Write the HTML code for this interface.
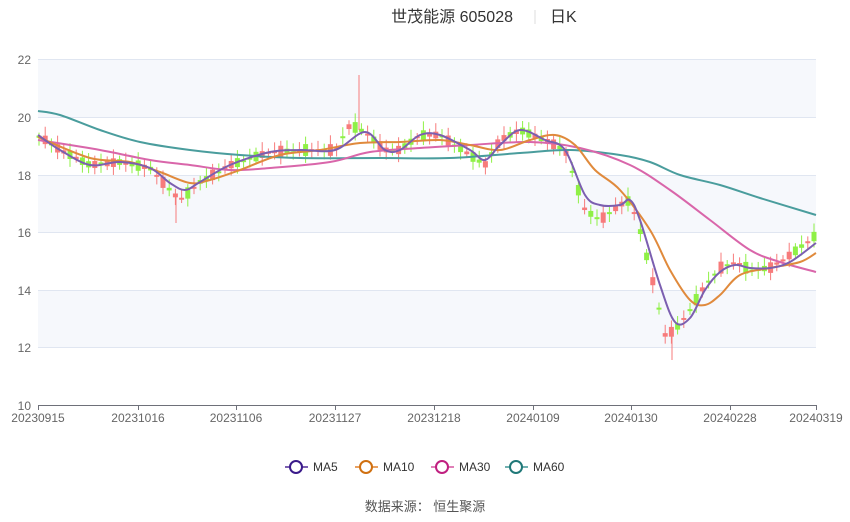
<!DOCTYPE html>
<html><head><meta charset="utf-8"><style>
body{margin:0;background:#fff;width:850px;height:517px;overflow:hidden;font-family:"Liberation Sans","Noto Sans CJK SC",sans-serif;}
</style></head><body>
<svg id="s" width="850" height="517" xmlns="http://www.w3.org/2000/svg" font-family="Liberation Sans, Noto Sans CJK SC, sans-serif">
<text x="513" y="22" font-size="16" fill="#333" text-anchor="end">世茂能源 605028</text>
<line x1="535" y1="10" x2="535" y2="24" stroke="#ddd"/>
<text x="550" y="22" font-size="16" fill="#333">日K</text>
<rect x="38" y="59" width="778" height="58" fill="#f6f8fc"/>
<rect x="38" y="175" width="778" height="57" fill="#f6f8fc"/>
<rect x="38" y="290" width="778" height="57" fill="#f6f8fc"/>
<g stroke="#e0e6f1" stroke-width="1">
<line x1="38" y1="59.5" x2="816" y2="59.5"/><line x1="38" y1="117.5" x2="816" y2="117.5"/>
<line x1="38" y1="175.5" x2="816" y2="175.5"/><line x1="38" y1="232.5" x2="816" y2="232.5"/>
<line x1="38" y1="290.5" x2="816" y2="290.5"/><line x1="38" y1="347.5" x2="816" y2="347.5"/>
</g>
<g font-size="12" fill="#666" text-anchor="end">
<text x="31" y="64">22</text><text x="31" y="122">20</text><text x="31" y="180">18</text>
<text x="31" y="237">16</text><text x="31" y="295">14</text><text x="31" y="352">12</text><text x="31" y="410">10</text>
</g>
<line x1="38" y1="405.5" x2="816" y2="405.5" stroke="#6e7079"/>
<g stroke="#6e7079">
<line x1="38.5" y1="405" x2="38.5" y2="410"/><line x1="138.5" y1="405" x2="138.5" y2="410"/><line x1="236.5" y1="405" x2="236.5" y2="410"/><line x1="335.5" y1="405" x2="335.5" y2="410"/><line x1="434.5" y1="405" x2="434.5" y2="410"/><line x1="533.5" y1="405" x2="533.5" y2="410"/><line x1="631.5" y1="405" x2="631.5" y2="410"/><line x1="730.5" y1="405" x2="730.5" y2="410"/><line x1="816.5" y1="405" x2="816.5" y2="410"/>
</g>
<g font-size="12" fill="#666" text-anchor="middle">
<text x="38" y="422">20230915</text><text x="138" y="422">20231016</text><text x="236" y="422">20231106</text><text x="335" y="422">20231127</text><text x="434" y="422">20231218</text><text x="533" y="422">20240109</text><text x="631" y="422">20240130</text><text x="730" y="422">20240228</text><text x="816" y="422">20240319</text>
</g>
<g id="c"></g>
<g id="l" fill="none" stroke-width="2"></g>
<g font-size="12" fill="#333" stroke-width="2">
<line x1="285" y1="467" x2="308" y2="467" stroke="#7b5fb0"/><circle cx="296" cy="467" r="6" fill="#fff" stroke="#3a1a8a"/><text x="313" y="471">MA5</text>
<line x1="355" y1="467" x2="378" y2="467" stroke="#e8a060"/><circle cx="366" cy="467" r="6" fill="#fff" stroke="#d07010"/><text x="383" y="471">MA10</text>
<line x1="431" y1="467" x2="454" y2="467" stroke="#e080b8"/><circle cx="442" cy="467" r="6" fill="#fff" stroke="#c02080"/><text x="459" y="471">MA30</text>
<line x1="505" y1="467" x2="528" y2="467" stroke="#70b0b0"/><circle cx="516" cy="467" r="6" fill="#fff" stroke="#207878"/><text x="533" y="471">MA60</text>
</g>
<text x="425" y="511" font-size="13" fill="#555" text-anchor="middle">数据来源：  恒生聚源</text>
</svg>
<script>
var k=[[38,135],[60,150],[90,165],[120,162],[150,168],[170,190],[180,200],[200,182],[230,165],[270,152],[300,150],[335,150],[350,125],[365,132],[385,150],[400,150],[420,135],[440,135],[470,155],[485,165],[500,140],[520,130],[545,140],[565,150],[585,210],[600,220],[620,205],[630,200],[640,230],[655,290],[665,335],[675,330],[690,310],[705,285],[720,268],[735,262],[750,270],[770,268],[790,255],[816,235]];
function f(x){for(var i=1;i<k.length;i++)if(x<=k[i][0]){var a=k[i-1],b=k[i];return a[1]+(b[1]-a[1])*(x-a[0])/(b[0]-a[0]);}return k[k.length-1][1];}
var g=document.getElementById('c'),h='';
for(var i=0;i<126;i++){var x=39+i*6.2;var m=f(x);var n=Math.sin(i*2.3)*6+Math.sin(i*0.7)*4;var o=m+n*0.6,c=m-n*0.6;var up=c<o;var col=up?'#f77b7b':'#8ff046';var t=Math.min(o,c),bt=Math.max(o,c);if(bt-t<2)bt=t+2;var hi=t-3-Math.abs(Math.sin(i*1.7))*6,lo=bt+3+Math.abs(Math.cos(i*1.3))*5;
h+='<line x1="'+x+'" x2="'+x+'" y1="'+hi+'" y2="'+lo+'" stroke="'+col+'"/><rect x="'+(x-2.5)+'" y="'+t+'" width="5" height="'+(bt-t)+'" fill="'+col+'"/>';}
h+='<line x1="359" x2="359" y1="75" y2="130" stroke="#f77b7b"/><line x1="176" x2="176" y1="195" y2="223" stroke="#f77b7b"/><line x1="672" x2="672" y1="330" y2="360" stroke="#f77b7b"/>';
g.innerHTML=h;
function sm(p){var d='M'+p[0][0]+','+p[0][1];for(var i=0;i<p.length-1;i++){var p0=p[i-1]||p[i],p1=p[i],p2=p[i+1],p3=p[i+2]||p2;var t=6;d+=' C'+(p1[0]+(p2[0]-p0[0])/t)+','+(p1[1]+(p2[1]-p0[1])/t)+' '+(p2[0]-(p3[0]-p1[0])/t)+','+(p2[1]-(p3[1]-p1[1])/t)+' '+p2[0]+','+p2[1];}return d;}
var L=[["#4a9d9d",[[38,111],[60,115],[100,130],[140,142],[190,150],[240,155],[300,158],[380,158],[450,158],[520,153],[570,150],[620,155],[650,162],[680,175],[720,185],[760,198],[816,215]]],
["#d966aa",[[38,140],[100,150],[150,160],[190,165],[230,170],[270,168],[330,162],[370,152],[420,148],[470,145],[530,142],[580,148],[630,165],[670,190],[710,220],[750,250],[780,262],[816,272]]],
["#e08a3c",[[38,137],[90,158],[130,162],[160,172],[190,183],[210,180],[240,170],[280,155],[320,150],[360,143],[400,142],[440,140],[470,145],[500,150],[530,140],[555,135],[575,145],[595,170],[620,190],[650,230],[670,270],[690,300],[705,305],[720,295],[740,275],[770,268],[800,262],[816,253]]],
["#7b5fb0",[[38,135],[60,150],[90,165],[120,162],[150,168],[170,183],[185,190],[200,182],[230,165],[270,152],[300,150],[335,150],[365,132],[385,150],[400,150],[420,135],[440,135],[470,150],[485,160],[500,145],[520,130],[545,140],[565,150],[585,195],[600,205],[620,205],[630,200],[640,220],[660,285],[675,322],[690,318],[705,290],[720,272],[735,265],[750,268],[770,268],[790,262],[816,243]]]];
var s='';L.forEach(function(q){s+='<path d="'+sm(q[1])+'" stroke="'+q[0]+'"/>';});
document.getElementById('l').innerHTML=s;
</script>
</body></html>
